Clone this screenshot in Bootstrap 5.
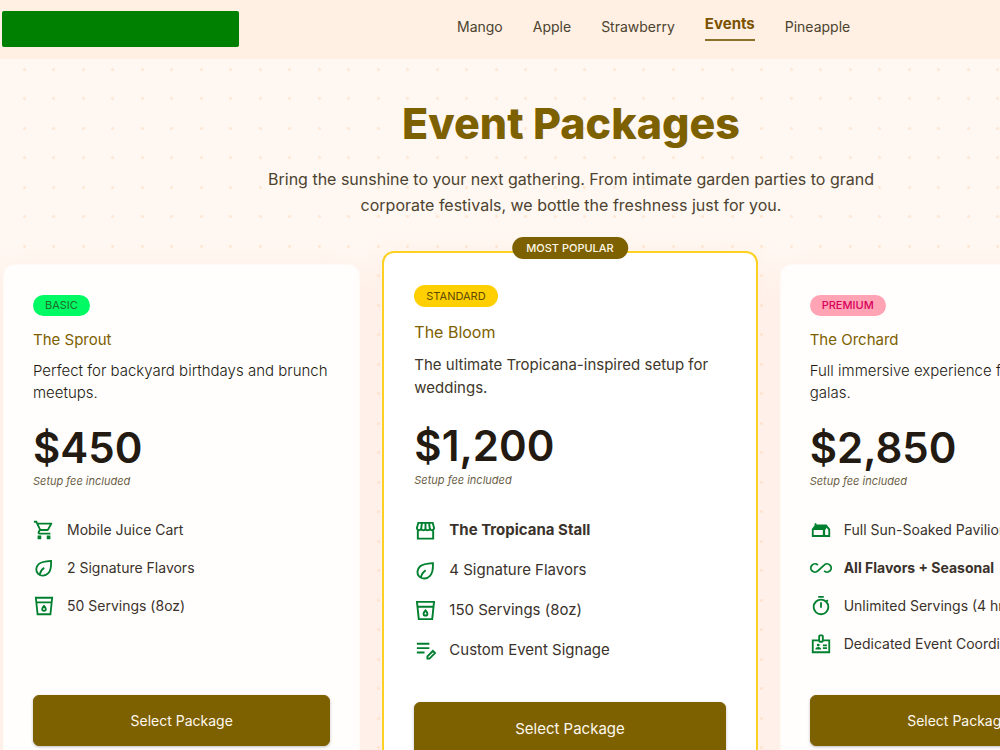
<!DOCTYPE html>
<html lang="en">
<head>
<meta charset="utf-8">
<meta name="viewport" content="width=device-width, initial-scale=1">
<title>Event Packages</title>
<link href="https://cdn.jsdelivr.net/npm/bootstrap@5.3.0/dist/css/bootstrap.min.css" rel="stylesheet">
<style>
  :root { --olive: #7d6000; --leaf: #00802f; --ink: #231a12; --soft: #4c4330; }
  body {
    font-family: Inter, "Liberation Sans", sans-serif;
    font-size: 14px;
    color: var(--ink);
    overflow-x: hidden;
    background-color: #fff7f1;
    /* dot grid: four dots per tile */
    background-image:
      radial-gradient(circle, #ffe8d4 1px, transparent 2px),
      radial-gradient(circle, #ffe8d4 1px, transparent 2px),
      radial-gradient(circle, #ffe8d4 1px, transparent 2px),
      radial-gradient(circle, #ffe8d4 1px, transparent 2px);
    background-size: 59px 59px;
    background-position: -5px -19px, 24px -19px, -5px 10px, 24px 10px;
  }
  .page-wide { min-width: 1142px; }
  .top-bar { background: #fff0e3; height: 59px; padding: 0 2px 2px; }
  .logo-block { width: 237px; height: 36px; background: #008000; border-radius: 2px; }
  .main-nav { margin-left: 218px; margin-bottom: 3px; gap: 30px; }
  .main-nav .nav-link { padding: 0; font-size: 14px; line-height: 20px; color: #4c4330; }
  .main-nav .nav-link.active { font-size: 15px; color: #7a5200; font-weight: 700; padding-bottom: 5px; border-bottom: 2px solid #8a7128; }
  .hero { padding-top: 38px; }
  .hero h1 { font-size: 43px; line-height: 52px; font-weight: 800; color: var(--olive); margin-bottom: 17px; }
  .hero p { font-size: 16px; line-height: 26px; max-width: 640px; color: var(--soft); margin: 0 auto 33px; }
  .plans { display: grid; grid-template-columns: 357fr 375fr 357fr; column-gap: 22px; padding: 0 5px 40px 3px; }
  .plan {
    margin: 13px 0; padding: 30px 29px; background: #fffefd; border: 1px solid #fffaf5;
    border-radius: 12px; box-shadow: 0 10px 30px rgba(255, 190, 170, .2);
  }
  .pill { font-size: 11px; line-height: 21px; padding: 0 12px; border-radius: 11px; color: #5c4a00; }
  .pill-basic { background: #00fa64; color: #1f6b2c; }
  .pill-standard { background: #ffcf00; }
  .pill-premium { background: #ffa3b5; color: #d8005a; }
  .plan h2 { font-size: 15px; line-height: 20px; font-weight: 400; color: var(--olive); margin: 14px 0 10px; }
  .plan .blurb { font-size: 15px; font-weight: 300; line-height: 22px; margin-bottom: 22px; color: var(--ink); }
  .price { font-size: 42px; line-height: 44px; font-weight: 600; }
  .setup { font-size: 11px; line-height: 16px; margin-top: 3px; color: #6b6148; }
  .perks { margin: 30px 0 40px; display: grid; gap: 16px; }
  .perks li { display: flex; align-items: center; gap: 12px; line-height: 22px; color: #3a322b; white-space: nowrap; }
  .perks svg { width: 22px; height: 22px; flex: none; color: var(--leaf); }
  .btn-pick {
    --bs-btn-color: #fff8ee; --bs-btn-bg: var(--olive); --bs-btn-border-color: var(--olive);
    --bs-btn-hover-color: #fff; --bs-btn-hover-bg: #6a5200;
    font-size: 14px; height: 51px; border-radius: 6px; box-shadow: 0 1px 3px rgba(0, 0, 0, .25);
  }
  .plan-top { margin: 0; padding: 32px 30px; background: #fff; border: 2px solid #fdd023; }
  .plan-top .pill { line-height: 22px; }
  .plan-top h2 { font-size: 16px; line-height: 22px; }
  .plan-top .blurb { font-weight: 400; line-height: 23px; margin-bottom: 24px; color: #40372a; }
  .plan-top .price { line-height: 46px; }
  .plan-top .perks li { font-size: 15px; line-height: 24px; }
  .plan-top .perks svg { width: 23px; height: 23px; }
  .plan-top .btn-pick { height: 54px; font-size: 15px; }
  .ribbon {
    top: 0; left: 50%; transform: translate(-50%, -16px); padding: 0 14px; border-radius: 11px;
    font-size: 11px; line-height: 22px; font-weight: 500; color: #fff8e6; background: var(--olive); white-space: nowrap;
  }
</style>
</head>
<body>
<svg class="d-none" xmlns="http://www.w3.org/2000/svg">
  <symbol id="i-cart" viewBox="0 0 24 24"><path fill="currentColor" d="M15.550 13c.75 0 1.410-.41 1.750-1.030l3.580-6.490A1 1 0 0 0 20 4H5.200l-.93-2H1v2h2l3.600 7.590-1.350 2.440C4.500 15.370 5.500 17 7 17h12v-2H7l1.100-2zM6.160 6h12.150l-2.760 5H8.530zM5 18h4v4H5zM15 18h4v4h-4z"/></symbol>
  <symbol id="i-leaf" viewBox="0 0 24 24"><path fill="none" stroke="currentColor" stroke-width="2" d="M5.600 18.400C2.600 15.500 3 10.800 6.200 7.800 9 5.200 14.500 4.600 19.700 4.300c.3 5.500-.4 10.700-3 13.300-3.200 3.300-8 3.700-11.100.8zM7.200 19.500c.5-3.200 2.200-5.700 5-7.700"/></symbol>
  <symbol id="i-cup" viewBox="0 0 24 24"><g fill="none" stroke="currentColor" stroke-width="2"><path d="M3.100 3h17.800L19 21H5zM4 8h16"/><path d="M12 12c1.400 1.500 2 2.400 2 3.300a2 2 0 0 1-4 0c0-.9.6-1.800 2-3.300z"/></g></symbol>
  <symbol id="i-stall" viewBox="0 0 24 24"><g fill="none" stroke="currentColor" stroke-width="2"><path d="M4 12v8.500h16V12M4.500 4h15L21 9.500a2.300 2.300 0 0 1-4.500.5 2.300 2.300 0 0 1-4.500 0 2.300 2.300 0 0 1-4.500 0A2.300 2.300 0 0 1 3 9.500zM8.300 4l-.8 6M12 4v6M15.700 4l.8 6"/></g></symbol>
  <symbol id="i-note" viewBox="0 0 24 24"><path fill="none" stroke="currentColor" stroke-width="2" d="M3 5h13M3 9.500h13M3 14h8M14 20.500v-2.300l5.700-5.700 2.200 2.200-5.700 5.800z"/></symbol>
  <symbol id="i-house" viewBox="0 0 24 24"><path fill="currentColor" fill-rule="evenodd" d="M2 19.500V11l3-4V4.500h2V6h11l4 5v8.500zM4 17.500h10V12H4zM16.500 17.500H20V12l-1.800-2.500-1.700 2.500z"/></symbol>
  <symbol id="i-loop" viewBox="0 0 24 24"><path fill="none" stroke="currentColor" stroke-width="2" d="M9.500 14.300 8.600 15.200a4.500 4.500 0 1 1 0-6.400M8.600 15.200l6.800-6.400a4.500 4.500 0 1 1 0 6.400"/></symbol>
  <symbol id="i-timer" viewBox="0 0 24 24"><g fill="none" stroke="currentColor" stroke-width="2"><circle cx="12" cy="13" r="8"/><path d="M9 2h6M12 8v6M18 7l1.500-1.500"/></g></symbol>
  <symbol id="i-badge" viewBox="0 0 24 24"><g fill="none" stroke="currentColor" stroke-width="2"><path d="M9.500 8H3v13h18V8h-6.500"/><rect x="10" y="2.500" width="4" height="7" rx="1"/><path d="M14 13.500h4.500M14 16.500h4.500"/></g><circle cx="9" cy="13.200" r="1.600" fill="currentColor"/><path fill="currentColor" d="M5.800 18c0-3.500 6.400-3.500 6.400 0z"/></symbol>
</svg>
<div class="page-wide">
  <header class="top-bar d-flex align-items-center">
    <div class="logo-block"></div>
    <nav class="nav main-nav align-items-center">
      <a class="nav-link" href="#">Mango</a>
      <a class="nav-link" href="#">Apple</a>
      <a class="nav-link" href="#">Strawberry</a>
      <a class="nav-link active" href="#">Events</a>
      <a class="nav-link" href="#">Pineapple</a>
    </nav>
  </header>
  <main>
    <section class="hero text-center">
      <h1>Event Packages</h1>
      <p>Bring the sunshine to your next gathering. From intimate garden parties to grand corporate festivals, we bottle the freshness just for you.</p>
    </section>
    <section class="plans">
      <article class="plan d-flex flex-column">
        <span class="pill pill-basic align-self-start">BASIC</span>
        <h2>The Sprout</h2>
        <p class="blurb">Perfect for backyard birthdays and brunch meetups.</p>
        <div class="price">$450</div>
        <div class="setup fst-italic">Setup fee included</div>
        <ul class="perks list-unstyled">
          <li><svg><use href="#i-cart"/></svg>Mobile Juice Cart</li>
          <li><svg><use href="#i-leaf"/></svg>2 Signature Flavors</li>
          <li><svg><use href="#i-cup"/></svg>50 Servings (8oz)</li>
        </ul>
        <button type="button" class="btn btn-pick w-100 mt-auto">Select Package</button>
      </article>
      <article class="plan plan-top d-flex flex-column position-relative">
        <span class="ribbon position-absolute">MOST POPULAR</span>
        <span class="pill pill-standard align-self-start">STANDARD</span>
        <h2>The Bloom</h2>
        <p class="blurb">The ultimate Tropicana-inspired setup for weddings.</p>
        <div class="price">$1,200</div>
        <div class="setup fst-italic">Setup fee included</div>
        <ul class="perks list-unstyled">
          <li class="fw-bold"><svg><use href="#i-stall"/></svg>The Tropicana Stall</li>
          <li><svg><use href="#i-leaf"/></svg>4 Signature Flavors</li>
          <li><svg><use href="#i-cup"/></svg>150 Servings (8oz)</li>
          <li><svg><use href="#i-note"/></svg>Custom Event Signage</li>
        </ul>
        <button type="button" class="btn btn-pick w-100 mt-auto">Select Package</button>
      </article>
      <article class="plan d-flex flex-column">
        <span class="pill pill-premium align-self-start fw-medium">PREMIUM</span>
        <h2>The Orchard</h2>
        <p class="blurb">Full immersive experience for corporate galas.</p>
        <div class="price">$2,850</div>
        <div class="setup fst-italic">Setup fee included</div>
        <ul class="perks list-unstyled">
          <li><svg><use href="#i-house"/></svg>Full Sun-Soaked Pavilion</li>
          <li class="fw-bold"><svg><use href="#i-loop"/></svg>All Flavors + Seasonal</li>
          <li><svg><use href="#i-timer"/></svg>Unlimited Servings (4 hrs)</li>
          <li><svg><use href="#i-badge"/></svg>Dedicated Event Coordinator</li>
        </ul>
        <button type="button" class="btn btn-pick w-100 mt-auto">Select Package</button>
      </article>
    </section>
  </main>
</div>
<script src="https://cdn.jsdelivr.net/npm/bootstrap@5.3.0/dist/js/bootstrap.bundle.min.js"></script>
</body>
</html>
